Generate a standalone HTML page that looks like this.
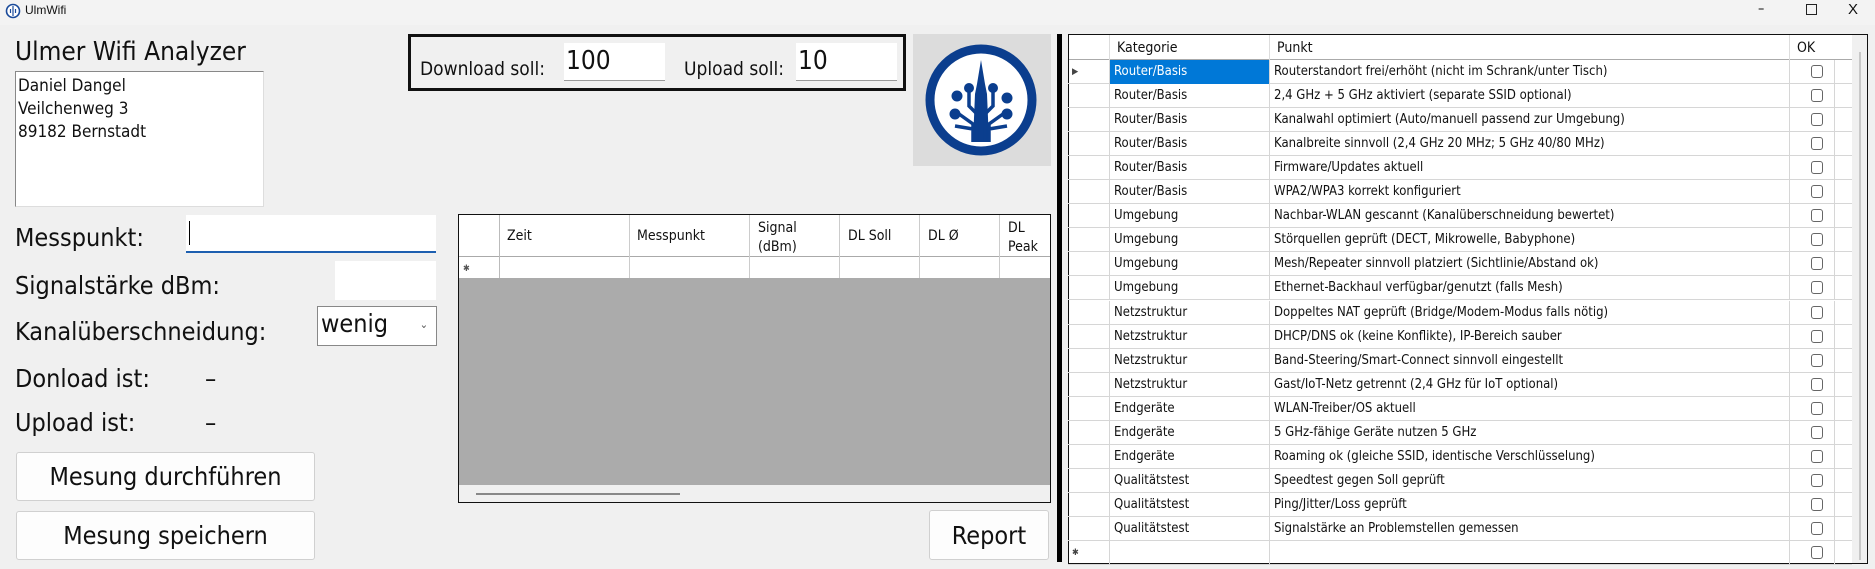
<!DOCTYPE html>
<html><head><meta charset="utf-8"><style>
*{margin:0;padding:0;box-sizing:border-box}
body{width:1875px;height:569px;background:#f0f0f0;position:relative;overflow:hidden;font-family:"DejaVu Sans Condensed","Liberation Sans Narrow","Liberation Sans",sans-serif;color:#111}
.a{position:absolute}
.lbl{position:absolute;font-size:25px;line-height:30px;white-space:nowrap}
.in{position:absolute;background:#fff}
.btn{position:absolute;background:#fdfdfd;border:1px solid #d0d0d0;border-radius:3px;font-size:25px;display:flex;align-items:center;justify-content:center}
.n{font-family:"Liberation Sans Narrow","DejaVu Sans Condensed",sans-serif}
.row{position:absolute;left:1068px;width:784px;height:24px;border-bottom:1px solid #d6d6d6;font-size:13px;line-height:24px}
.row div{position:absolute;top:0;height:24px;border-left:1px solid #d6d6d6;padding-left:4px;white-space:nowrap}
.cb{position:absolute;width:12px;height:13px;border:1px solid #666;border-radius:3px;background:#fff}
</style></head><body>
<div class="a" style="left:0;top:0;width:1875px;height:25px;background:#f3f3f3"></div>
<svg class="a" style="left:5px;top:3px" width="16" height="16" viewBox="0 0 16 16"><circle cx="8" cy="8" r="6.5" fill="#fff" stroke="#1a4a9a" stroke-width="1.6"/><path d="M8 3v10M5.5 6v4M10.5 6v4" stroke="#1a4a9a" stroke-width="1.2"/></svg>
<div class="a" style="left:25px;top:3px;font-size:12px;font-family:'Liberation Sans',sans-serif">UlmWifi</div>
<div class="a" style="left:1758px;top:1px;font-size:14px">–</div>
<div class="a" style="left:1806px;top:4px;width:11px;height:11px;border:1px solid #222"></div>
<div class="a" style="left:1848px;top:1px;font-size:15px;font-family:'Liberation Sans',sans-serif">X</div>

<div class="lbl" style="left:15px;top:37px;font-size:26px">Ulmer Wifi Analyzer</div>
<div class="in" style="left:15px;top:71px;width:249px;height:136px;border:1px solid #888;border-right-color:#ddd;border-bottom-color:#ddd;padding:3px 2px;font-size:17px;line-height:23px">Daniel Dangel<br>Veilchenweg 3<br>89182 Bernstadt</div>

<div class="a" style="left:408px;top:34px;width:498px;height:57px;border:3px solid #111"></div>
<div class="lbl" style="left:420px;top:56px;font-size:19px;line-height:26px">Download soll:</div>
<div class="in" style="left:564px;top:43px;width:101px;height:38px;border-bottom:1px solid #999;font-size:26px;padding-left:2px;line-height:36px">100</div>
<div class="lbl" style="left:684px;top:56px;font-size:19px;line-height:26px">Upload soll:</div>
<div class="in" style="left:796px;top:43px;width:101px;height:38px;border-bottom:1px solid #999;font-size:26px;padding-left:2px;line-height:36px">10</div>

<div class="a" style="left:913px;top:34px;width:138px;height:132px;background:#dcdcdc"></div>
<svg class="a" style="left:913px;top:34px" width="138" height="132" viewBox="0 0 138 132">
<circle cx="68" cy="66" r="51" fill="#fff" stroke="#0b3e8e" stroke-width="9"/>
<g fill="#0b3e8e" stroke="#0b3e8e">
<path d="M68 26 L72 50 L74 60 L76 108 L60 108 L62 60 L64 50 Z" stroke="none"/>
<path d="M64 108V80L56 72V58M72 108V80L80 72V58M60 108V90L46 80M76 108V90L90 80M60 95L42 92M76 95L94 92" fill="none" stroke-width="3.5"/>
<circle cx="56" cy="54" r="4.5"/><circle cx="80" cy="54" r="4.5"/><circle cx="44" cy="62" r="5"/><circle cx="94" cy="64" r="5"/><circle cx="42" cy="80" r="5"/><circle cx="94" cy="80" r="5"/>
</g></svg>

<div class="lbl" style="left:15px;top:223px">Messpunkt:</div>
<div class="in" style="left:186px;top:215px;width:250px;height:38px;border-bottom:2px solid #1d5fb0"><div class="a" style="left:3px;top:6px;width:1px;height:24px;background:#000"></div></div>
<div class="lbl" style="left:15px;top:271px">Signalstärke dBm:</div>
<div class="in" style="left:335px;top:261px;width:101px;height:39px"></div>
<div class="lbl" style="left:15px;top:317px">Kanalüberschneidung:</div>
<div class="in" style="left:317px;top:306px;width:120px;height:40px;border:1px solid #888;font-size:25px;padding-left:3px;line-height:34px">wenig<span style="position:absolute;right:8px;top:1px;font-size:11px;color:#555">⌄</span></div>
<div class="lbl" style="left:15px;top:364px">Donload ist:</div>
<div class="lbl" style="left:205px;top:364px">–</div>
<div class="lbl" style="left:15px;top:408px">Upload ist:</div>
<div class="lbl" style="left:205px;top:408px">–</div>
<div class="btn" style="left:16px;top:452px;width:299px;height:49px">Mesung durchführen</div>
<div class="btn" style="left:16px;top:511px;width:299px;height:49px">Mesung speichern</div>
<div class="btn" style="left:929px;top:510px;width:120px;height:50px">Report</div>

<div class="a" style="left:458px;top:214px;width:593px;height:289px;border:1px solid #111;background:#ababab"></div>
<div class="a" style="left:459px;top:215px;width:591px;height:63px;background:#fff"></div>
<div class="a" style="left:459px;top:256px;width:591px;height:1px;background:#aaa"></div>
<div class="a" style="left:459px;top:485px;width:591px;height:17px;background:#f0f0f0"></div>
<div class="a" style="left:476px;top:493px;width:204px;height:2px;background:#888"></div>
<div class="a" style="left:463px;top:264px;font-size:9px;color:#555">✱</div>
<div class="a" style="left:499px;top:215px;width:1px;height:63px;background:#bbb"></div>
<div class="a" style="left:629px;top:215px;width:1px;height:63px;background:#ccc"></div>
<div class="a" style="left:749px;top:215px;width:1px;height:63px;background:#ccc"></div>
<div class="a" style="left:839px;top:215px;width:1px;height:63px;background:#ccc"></div>
<div class="a" style="left:919px;top:215px;width:1px;height:63px;background:#ccc"></div>
<div class="a" style="left:999px;top:215px;width:1px;height:63px;background:#ccc"></div>
<div class="a n" style="left:507px;top:228px;font-size:14px">Zeit</div>
<div class="a n" style="left:637px;top:228px;font-size:14px">Messpunkt</div>
<div class="a n" style="left:758px;top:219px;font-size:14px;line-height:19px">Signal<br>(dBm)</div>
<div class="a n" style="left:848px;top:228px;font-size:14px">DL Soll</div>
<div class="a n" style="left:928px;top:228px;font-size:14px">DL Ø</div>
<div class="a n" style="left:1008px;top:219px;font-size:14px;line-height:19px">DL<br>Peak</div>

<div class="a" style="left:1057px;top:34px;width:5px;height:528px;background:#000"></div>

<div class="a" style="left:1068px;top:34px;width:800px;height:530px;border:1px solid #111;background:#fff"></div>
<div class="a" style="left:1852px;top:35px;width:15px;height:528px;background:#f0f0f0"></div>
<div class="a" style="left:1859px;top:52px;width:2px;height:508px;background:#c8c8c8"></div>
<div class="a" style="left:1069px;top:59px;width:783px;height:1px;background:#aaa"></div>
<div class="a" style="left:1109px;top:35px;width:1px;height:25px;background:#ddd"></div>
<div class="a" style="left:1269px;top:35px;width:1px;height:25px;background:#ddd"></div>
<div class="a" style="left:1789px;top:35px;width:1px;height:25px;background:#ddd"></div>
<div class="a n" style="left:1117px;top:40px;font-size:14px">Kategorie</div>
<div class="a n" style="left:1277px;top:40px;font-size:14px">Punkt</div>
<div class="a n" style="left:1797px;top:40px;font-size:14px">OK</div>
<div id="rows"></div>
<script>
var d=[["Router/Basis","Routerstandort frei/erhöht (nicht im Schrank/unter Tisch)"],["Router/Basis","2,4 GHz + 5 GHz aktiviert (separate SSID optional)"],["Router/Basis","Kanalwahl optimiert (Auto/manuell passend zur Umgebung)"],["Router/Basis","Kanalbreite sinnvoll (2,4 GHz 20 MHz; 5 GHz 40/80 MHz)"],["Router/Basis","Firmware/Updates aktuell"],["Router/Basis","WPA2/WPA3 korrekt konfiguriert"],["Umgebung","Nachbar-WLAN gescannt (Kanalüberschneidung bewertet)"],["Umgebung","Störquellen geprüft (DECT, Mikrowelle, Babyphone)"],["Umgebung","Mesh/Repeater sinnvoll platziert (Sichtlinie/Abstand ok)"],["Umgebung","Ethernet-Backhaul verfügbar/genutzt (falls Mesh)"],["Netzstruktur","Doppeltes NAT geprüft (Bridge/Modem-Modus falls nötig)"],["Netzstruktur","DHCP/DNS ok (keine Konflikte), IP-Bereich sauber"],["Netzstruktur","Band-Steering/Smart-Connect sinnvoll eingestellt"],["Netzstruktur","Gast/IoT-Netz getrennt (2,4 GHz für IoT optional)"],["Endgeräte","WLAN-Treiber/OS aktuell"],["Endgeräte","5 GHz-fähige Geräte nutzen 5 GHz"],["Endgeräte","Roaming ok (gleiche SSID, identische Verschlüsselung)"],["Qualitätstest","Speedtest gegen Soll geprüft"],["Qualitätstest","Ping/Jitter/Loss geprüft"],["Qualitätstest","Signalstärke an Problemstellen gemessen"],["",""]];
var h="";
for(var i=0;i<d.length;i++){var t=60+i*24.05;var sel=i==0?"background:#0078d7;color:#fff;":"";
h+='<div class="row n" style="top:'+t+'px"><div style="left:0;border:none;font-size:9px;color:#444">'+(i==0?'▶':(i==20?'✱':''))+'</div><div style="left:41px;width:160px;'+sel+'">'+d[i][0]+'</div><div style="left:201px;width:520px">'+d[i][1]+'</div><div style="left:721px;width:45px"><span class="cb" style="left:21px;top:5px"></span></div><div style="left:766px;width:18px"></div></div>';}
document.getElementById("rows").innerHTML=h;
</script>
</body></html>
